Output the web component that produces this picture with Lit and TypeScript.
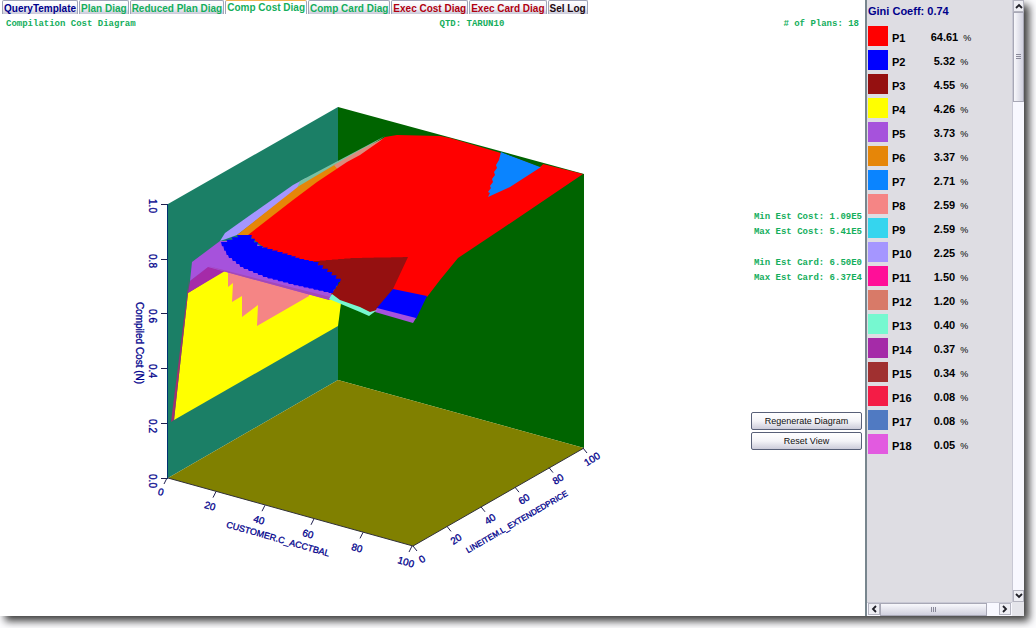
import { LitElement, html, svg, css } from "lit";
import { customElement, property, state } from "lit/decorators.js";

type Pt = [number, number];

interface Plan {
  name: string;
  share: string;
  color: string;
}

const PLANS: Plan[] = [
  { name: "P1", share: "64.61", color: "#ff0000" },
  { name: "P2", share: "5.32", color: "#0000ff" },
  { name: "P3", share: "4.55", color: "#951010" },
  { name: "P4", share: "4.26", color: "#ffff00" },
  { name: "P5", share: "3.73", color: "#a652dc" },
  { name: "P6", share: "3.37", color: "#e68608" },
  { name: "P7", share: "2.71", color: "#0a84ff" },
  { name: "P8", share: "2.59", color: "#f58585" },
  { name: "P9", share: "2.59", color: "#35d5ee" },
  { name: "P10", share: "2.25", color: "#a596ff" },
  { name: "P11", share: "1.50", color: "#ff0f98" },
  { name: "P12", share: "1.20", color: "#d87a68" },
  { name: "P13", share: "0.40", color: "#76f8d0" },
  { name: "P14", share: "0.37", color: "#a52ba8" },
  { name: "P15", share: "0.34", color: "#a03030" },
  { name: "P16", share: "0.08", color: "#f41c46" },
  { name: "P17", share: "0.08", color: "#507ac2" },
  { name: "P18", share: "0.05", color: "#e25ae0" },
];

const TABS = [
  { label: "QueryTemplate", tone: "navy" },
  { label: "Plan Diag", tone: "green" },
  { label: "Reduced Plan Diag", tone: "green" },
  { label: "Comp Cost Diag", tone: "green" },
  { label: "Comp Card Diag", tone: "green" },
  { label: "Exec Cost Diag", tone: "red" },
  { label: "Exec Card Diag", tone: "red" },
  { label: "Sel Log", tone: "black" },
];

/* Turns a slanted run of points into a staircase, one step per grid cell. */
function stairs(points: Pt[], cell: number): Pt[] {
  const out: Pt[] = [points[0]];
  for (let i = 1; i < points.length; i++) {
    const [x0, y0] = points[i - 1];
    const [x1, y1] = points[i];
    const n = Math.max(1, Math.round(Math.hypot(x1 - x0, y1 - y0) / cell));
    for (let s = 1; s <= n; s++) {
      const x = x0 + ((x1 - x0) * s) / n;
      const y = y0 + ((y1 - y0) * s) / n;
      const prev = out[out.length - 1];
      out.push([x + 1, prev[1]], [x, y]);
    }
  }
  return out;
}

const poly = (points: Pt[], fill: string) =>
  svg`<polygon points=${points.map((p) => p.join(",")).join(" ")} fill=${fill}></polygon>`;

@customElement("cost-surface")
class CostSurface extends LitElement {
  static styles = css`
    :host {
      display: block;
      min-width: 0;
      min-height: 0;
    }
    .plot {
      display: block;
      width: 100%;
      height: 100%;
    }
    .label {
      font-family: "Liberation Sans", Arial, sans-serif;
      font-size: 10px;
      fill: #00008b;
      text-anchor: middle;
      dominant-baseline: central;
      stroke: #00008b;
      stroke-width: 0.3px;
    }
    .title {
      font-size: 9px;
    }
    .long {
      font-size: 8px;
    }
  `;

  private tick(x: number, y: number, dx: number, dy: number) {
    return svg`<line x1=${x} y1=${y} x2=${x + dx} y2=${y + dy} stroke="#202050" stroke-width="1"></line>`;
  }

  private label(text: string, x: number, y: number, angle: number, cls = "label") {
    return svg`<text class=${cls} transform=${`translate(${x} ${y}) rotate(${angle})`}>${text}</text>`;
  }

  render() {
    const steps = [0, 1, 2, 3, 4, 5];
    const blue: Pt[] = [
      ...stairs([[221, 242], [237, 235], [248, 235], [257, 246], [287, 255], [299, 259], [313, 262], [327, 272], [340, 282]], 5),
      ...stairs([[340, 282], [333, 293], [293, 284], [267, 277], [243, 267], [228, 255], [221, 242]], 5),
    ];
    return html`
      <svg class="plot" viewBox="0 34 745 582" role="img" aria-label="Compilation cost surface">
        ${poly([[168, 204], [338, 107], [338, 380], [168, 478]], "#1b7f66")}
        ${poly([[338, 107], [584, 174], [584, 448], [338, 380]], "#006400")}
        ${poly([[168, 478], [338, 380], [584, 448], [413, 546]], "#808000")}
        ${poly([[174, 420], [188, 293], [225, 270], [330, 296], [341, 303], [338, 326]], "#ffff00")}
        ${poly([[228, 270], [309, 292], [309, 296], [257, 326], [258, 305], [242, 317], [242, 296], [232, 302], [233, 283], [228, 287]], "#f58585")}
        ${poly([[189, 279], [188, 293], [174, 420], [171, 422]], "#a03070")}
        ${poly([[190, 281], [208, 266], [230, 270], [225, 271], [188, 293]], "#a52ba8")}
        ${poly([[192, 262], [220, 241], [250, 240], [335, 290], [330, 300], [208, 267], [190, 281]], "#a652dc")}
        ${poly([[208, 266], [330, 297], [329, 300], [226, 272]], "#a348b8")}
        ${poly([[220, 241], [225, 233], [293, 185], [306, 178], [306, 182], [237, 235], [226, 239]], "#a596ff")}
        ${poly([[300, 181], [385, 136], [360, 152], [297, 188]], "#78c0a4")}
        ${poly([[237, 235], [299, 186], [336, 164], [352, 158], [300, 205], [248, 236]], "#e68608")}
        ${poly([[334, 165], [360, 150], [386, 137], [384, 140], [340, 172]], "#dc8c7c")}
        ${poly(
          [
            [248, 235], [293, 200], [317, 182], [347, 162], [360, 155], [380, 141], [385, 137], [397, 135],
            [440, 136], [450, 138], [501, 153], [541, 166], [543, 164], [583, 174], [503, 228], [458, 258],
            [440, 280], [427, 297], [393, 290], [350, 275], [330, 284], [280, 260],
          ],
          "#ff0000",
        )}
        ${poly(
          [
            [501, 152], [541, 167], [510, 187], [488, 197], [490, 193], [488, 192], [491, 188], [490, 186],
            [493, 182], [492, 179], [495, 175], [494, 172], [497, 168], [496, 165], [499, 160],
          ],
          "#0a84ff",
        )}
        ${poly([[501, 152], [543, 164], [540, 167]], "#006400")}
        ${poly([...stairs([[313, 261], [350, 258], [408, 257]], 6), [393, 289], [377, 311], [370, 314], [340, 303], [331, 294], [340, 282]], "#951010")}
        ${poly(blue, "#0000ff")}
        ${poly([[393, 289], [427, 296], [416, 319], [376, 309]], "#0000ff")}
        ${poly([[377, 308], [416, 318], [413, 323], [375, 312]], "#a652dc")}
        ${poly([[332, 294], [340, 300], [360, 307], [370, 312], [377, 310], [369, 316], [360, 312], [329, 299]], "#76f8d0")}

        <line x1="167.5" y1="204" x2="167.5" y2="479" stroke="#003070" stroke-width="1"></line>
        <polyline points="168,478 413,546 584,448" fill="none" stroke="#303038" stroke-width="1"></polyline>

        ${steps.map((i) => [
          this.tick(161, 478.5 - i * 55 + (i > 3 ? 1 : 0), 6, 0),
          this.label((i / 5).toFixed(1), 152, 481 - i * 55, 90),
          this.tick(167 + i * 49, 478 + i * 13.6, -3, 6),
          this.label(String(i * 20), 161 + i * 49, 492 + i * 14, 16),
          this.tick(413 + i * 34, 546 - i * 19.6, 4, 5),
          this.label(String(i * 20), 422 + i * 34, 559 - i * 20, -32),
        ])}
        ${this.label("Compiled Cost (N)", 139, 343, 90)}
        ${this.label("CUSTOMER.C_ACCTBAL", 278, 539, 16, "label title")}
        ${this.label("LINEITEM.L_EXTENDEDPRICE", 517, 522, -30, "label long")}
      </svg>
    `;
  }
}

@customElement("scroll-bar")
class ScrollBar extends LitElement {
  @property({ reflect: true }) direction: "vertical" | "horizontal" = "vertical";

  static styles = css`
    :host {
      display: flex;
      box-sizing: border-box;
      background: #f8f8ff;
    }
    :host([direction="vertical"]) {
      flex-direction: column;
      width: 12px;
      border-left: 1px solid #c8c8d4;
    }
    :host([direction="horizontal"]) {
      height: 14px;
      padding: 0 1px;
      border-top: 1px solid #c8c8d4;
    }
    .arrow {
      flex: none;
      display: grid;
      place-items: center;
      padding: 0;
      width: 12px;
      height: 12px;
      border: 1px solid #b4b4c0;
      background: #eeeef4;
    }
    .track {
      flex: 1;
      display: flex;
      min-width: 0;
      min-height: 0;
    }
    .thumb {
      box-sizing: border-box;
      display: grid;
      place-items: center;
      border: 1px solid #a8a8b6;
    }
    :host([direction="vertical"]) .arrow {
      width: 11px;
    }
    :host([direction="vertical"]) .track {
      flex-direction: column;
    }
    :host([direction="vertical"]) .thumb {
      height: 15.5%;
      background: linear-gradient(to right, #f8f8fc, #d0d0de);
    }
    :host([direction="horizontal"]) .thumb {
      width: 90%;
      background: linear-gradient(#f8f8fc, #d0d0de);
    }
  `;

  private arrow(d: string, label: string) {
    return html`<button class="arrow" aria-label=${label}>
      <svg width="8" height="8" viewBox="0 0 8 8" fill="none" stroke="#202028" stroke-width="1.8"><path d=${d}></path></svg>
    </button>`;
  }

  render() {
    const vertical = this.direction === "vertical";
    return html`
      ${vertical ? this.arrow("M1 6l3-3 3 3", "Scroll up") : this.arrow("M6 1L3 4l3 3", "Scroll left")}
      <div class="track">
        <div class="thumb">
          <svg width="7" height="7" viewBox="0 0 7 7" stroke="#8a8a9a">
            <path d=${vertical ? "M1 1.5h5M1 3.5h5M1 5.5h5" : "M1.5 1v5M3.5 1v5M5.5 1v5"}></path>
          </svg>
        </div>
      </div>
      ${vertical ? this.arrow("M1 2l3 3 3-3", "Scroll down") : this.arrow("M2 1l3 3-3 3", "Scroll right")}
    `;
  }
}

@customElement("app-root")
class AppRoot extends LitElement {
  @state() private selected = 3;

  static styles = css`
    :host {
      display: block;
      box-sizing: border-box;
      height: 100vh;
      padding: 0 12px 12px 0;
      background: #fdfdff;
      font-family: "Liberation Sans", Arial, sans-serif;
      overflow: hidden;
    }
    .window {
      display: grid;
      grid-template-columns: minmax(0, 1fr) 159px;
      height: 100%;
      background: #fff;
      box-shadow: 5px 5px 8px #3c3c3c;
    }
    .main {
      display: grid;
      grid-template-rows: 14px 20px minmax(0, 1fr);
      min-height: 0;
    }
    .tabs {
      display: flex;
      gap: 1px;
      padding-left: 2px;
    }
    .tab {
      box-sizing: border-box;
      height: 14px;
      padding: 2px 1px 0;
      border: 1px solid #a0a4b8;
      border-bottom: 0;
      border-radius: 2px 2px 0 0;
      background: linear-gradient(#fff, #f0f0f6 60%, #c8c8d8);
      font: bold 10px/12px "Liberation Sans", Arial, sans-serif;
      white-space: nowrap;
    }
    .tab.active {
      padding-top: 0;
      border-top: 1px solid #f0b050;
      background: #fff;
    }
    .navy { color: #00008b; }
    .green { color: #14ae5c; }
    .red { color: #b00010; }
    .black { color: #200810; }
    .mono {
      font: bold 9px/15px "Liberation Mono", "Courier New", monospace;
      color: #14ae5c;
      white-space: pre;
    }
    .heading {
      display: grid;
      grid-template-columns: 11fr auto 9fr;
      padding: 3px 6px 0;
    }
    .heading .end {
      text-align: right;
    }
    .body {
      display: grid;
      grid-template-columns: minmax(0, 1fr) 120px;
      min-height: 0;
    }
    .side {
      padding: 176px 3px 0 0;
    }
    .stats {
      display: grid;
      justify-content: end;
      row-gap: 16px;
      margin-bottom: 126px;
    }
    .actions {
      display: grid;
      gap: 2px;
      padding-left: 6px;
    }
    .action {
      height: 18px;
      padding: 0;
      border: 1px solid #586078;
      border-radius: 2px;
      background: linear-gradient(#fff, #f4f4f8 50%, #ccccda);
      color: #101010;
      font: 9px/14px "Liberation Sans", Arial, sans-serif;
    }
    .legend {
      display: grid;
      grid-template-columns: minmax(0, 1fr) 12px;
      grid-template-rows: minmax(0, 1fr) 14px;
      border-left: 2px solid #78868e;
      background: #dedde3;
    }
    .plans {
      min-height: 0;
      overflow: hidden;
      padding-left: 1px;
    }
    .gini {
      margin: 0;
      padding: 4px 0 6px;
      font-size: 11px;
      line-height: 14px;
      font-weight: bold;
      color: #00008b;
    }
    .table {
      border-collapse: collapse;
      font-size: 11px;
      line-height: 14px;
      color: #000;
    }
    .table td,
    .table th {
      box-sizing: border-box;
      height: 24px;
      padding: 0;
      font-weight: bold;
      text-align: left;
    }
    .table .name {
      width: 42px;
      padding: 3px 0 0 4px;
    }
    .table .share {
      width: 42px;
      padding-top: 3px;
      text-align: center;
      white-space: nowrap;
    }
    .unit {
      font-size: 9px;
      font-weight: normal;
      padding-left: 2px;
    }
    .swatch {
      width: 20px;
      height: 20px;
    }
    .corner {
      background: #e4e4ea;
    }
  `;

  render() {
    return html`
      <div class="window">
        <main class="main">
          <div class="tabs" role="tablist">
            ${TABS.map(
              (t, i) => html`<button
                class="tab ${t.tone} ${i === this.selected ? "active" : ""}"
                role="tab"
                aria-selected=${i === this.selected}
                @click=${() => (this.selected = i)}
              >${t.label}</button>`,
            )}
          </div>
          <div class="heading mono"><span>Compilation Cost Diagram</span><span>QTD: TARUN10</span><span class="end"># of Plans: 18</span></div>
          <div class="body">
            <cost-surface></cost-surface>
            <div class="side">
              <div class="stats mono"><div><div>Min Est Cost: 1.09E5</div><div>Max Est Cost: 5.41E5</div></div><div><div>Min Est Card: 6.50E0</div><div>Max Est Card: 6.37E4</div></div></div>
              <div class="actions">
                <button class="action">Regenerate Diagram</button>
                <button class="action">Reset View</button>
              </div>
            </div>
          </div>
        </main>
        <aside class="legend">
          <div class="plans">
            <h2 class="gini">Gini Coeff: 0.74</h2>
            <table class="table">
              <tbody>
                ${PLANS.map(
                  (p) => html`<tr>
                    <td><div class="swatch" style="background:${p.color}"></div></td>
                    <th class="name" scope="row">${p.name}</th>
                    <td class="share">${p.share} <span class="unit">%</span></td>
                  </tr>`,
                )}
              </tbody>
            </table>
          </div>
          <scroll-bar direction="vertical"></scroll-bar>
          <scroll-bar direction="horizontal"></scroll-bar>
          <div class="corner"></div>
        </aside>
      </div>
    `;
  }
}
